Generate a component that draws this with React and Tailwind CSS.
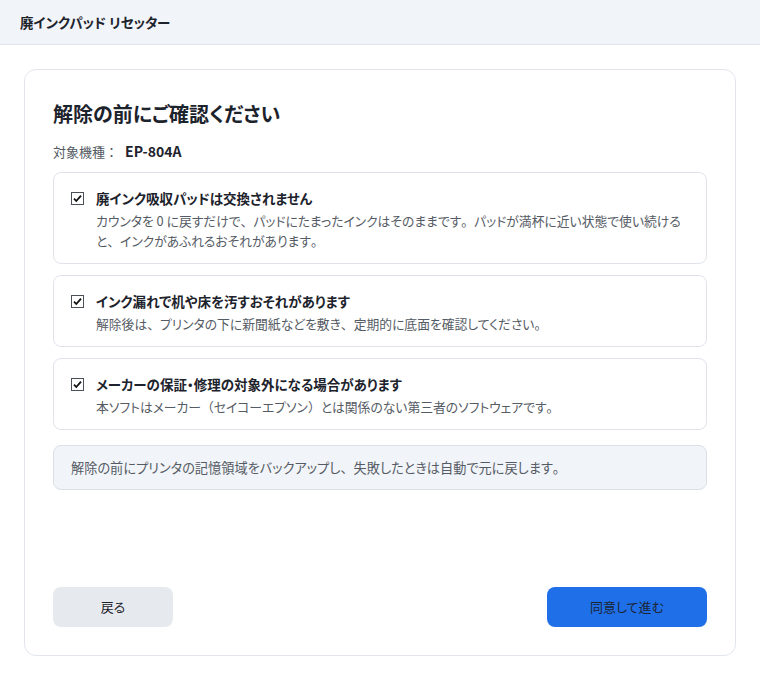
import React from "react";

const jp = "font-['Noto_Sans_CJK_JP','Noto_Sans',sans-serif] [font-feature-settings:'palt']";

// keep CJK punctuation full width while kana stay proportional
const wide = (s) =>
  s.split(/([、。（）：])/).map((p, i) =>
    /^[、。（）：]$/.test(p) ? (
      <span key={i} className="[font-feature-settings:normal]">
        {p}
      </span>
    ) : (
      p
    )
  );

const warnings = [
  {
    title: "廃インク吸収パッドは交換されません",
    body: "カウンタを 0 に戻すだけで、パッドにたまったインクはそのままです。パッドが満杯に近い状態で使い続けると、インクがあふれるおそれがあります。",
  },
  {
    title: "インク漏れで机や床を汚すおそれがあります",
    body: "解除後は、プリンタの下に新聞紙などを敷き、定期的に底面を確認してください。",
  },
  {
    title: "メーカーの保証・修理の対象外になる場合があります",
    body: "本ソフトはメーカー（セイコーエプソン）とは関係のない第三者のソフトウェアです。",
  },
];

// small checked box, drawn like the native one
const CheckMark = () => (
  <svg width="13" height="13" viewBox="0 0 13 13" className="shrink-0 mt-[4px]">
    <rect x="0.5" y="0.5" width="12" height="12" fill="#fff" stroke="#4b5058" />
    <path d="M3 6.6 L5.3 9 L10 3.6" fill="none" stroke="#111" strokeWidth="1.8" />
  </svg>
);

const WarningItem = ({ title, body }) => (
  <div className="border border-[#dfe3e9] rounded-lg pl-[17px] pr-3 pt-[15px] pb-3 flex gap-3">
    <CheckMark />
    <div className="flex-1">
      <div className="text-[13.5px] leading-5 font-bold text-[#1d232c]">{title}</div>
      <div className="mt-[3px] text-[12.8px] leading-5 text-[#555b64]">{wide(body)}</div>
    </div>
  </div>
);

export default function App() {
  return (
    <div className={`w-[760px] h-[680px] flex flex-col bg-white ${jp}`}>
      {/* title bar */}
      <div className="h-[45px] shrink-0 bg-[#f1f4f8] border-b border-[#e1e5eb] flex items-center px-5">
        <span className="text-[13.5px] font-bold text-[#1d232c]">廃インクパッド リセッター</span>
      </div>

      <div className="flex-1 p-6 flex">
        <div className="flex-1 border border-[#e1e5eb] rounded-xl p-7 flex flex-col">
          <h1 className="text-[20px] leading-8 font-bold text-[#1d232c]">解除の前にご確認ください</h1>
          <div className="mt-[11px] text-[13px] leading-5 text-[#555b64] flex items-baseline">
            <span className="[font-feature-settings:normal]">対象機種：</span>
            <span className="ml-[7px] text-[14px] font-bold text-[#1d232c]">EP-804A</span>
          </div>

          <div className="mt-[10px] flex flex-col gap-[11px]">
            {warnings.map((w) => (
              <WarningItem key={w.title} title={w.title} body={w.body} />
            ))}
          </div>

          <div className="mt-[15px] h-[45px] bg-[#f1f4f8] border border-[#dbe0e7] rounded-lg flex items-center px-[17px] text-[13.2px] text-[#555b64]">
            <span>{wide("解除の前にプリンタの記憶領域をバックアップし、失敗したときは自動で元に戻します。")}</span>
          </div>

          <div className="mt-auto flex justify-between">
            <button className="w-[120px] h-10 rounded-lg bg-[#e6e9ee] text-[13px] text-[#1d232c]">
              戻る
            </button>
            <button className="w-[160px] h-10 rounded-lg bg-[#1f6fe8] text-[13px] text-[#1b2533]">
              同意して進む
            </button>
          </div>
        </div>
      </div>
    </div>
  );
}
